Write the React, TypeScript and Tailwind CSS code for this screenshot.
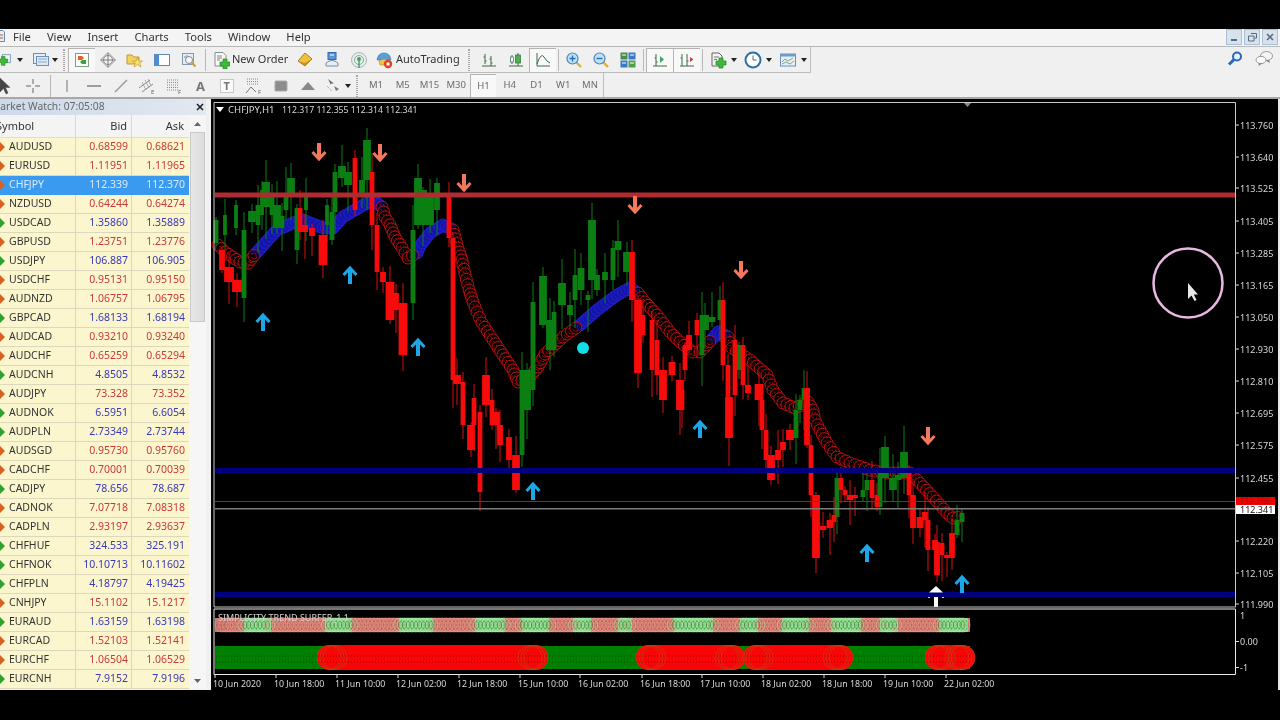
import React from "react";

type Row = [string, string, string, "r" | "b" | "s"];
const rows: Row[] = [
  ["AUDUSD", "0.68599", "0.68621", "r"],
  ["EURUSD", "1.11951", "1.11965", "r"],
  ["CHFJPY", "112.339", "112.370", "s"],
  ["NZDUSD", "0.64244", "0.64274", "r"],
  ["USDCAD", "1.35860", "1.35889", "b"],
  ["GBPUSD", "1.23751", "1.23776", "r"],
  ["USDJPY", "106.887", "106.905", "b"],
  ["USDCHF", "0.95131", "0.95150", "r"],
  ["AUDNZD", "1.06757", "1.06795", "r"],
  ["GBPCAD", "1.68133", "1.68194", "b"],
  ["AUDCAD", "0.93210", "0.93240", "r"],
  ["AUDCHF", "0.65259", "0.65294", "r"],
  ["AUDCNH", "4.8505", "4.8532", "b"],
  ["AUDJPY", "73.328", "73.352", "r"],
  ["AUDNOK", "6.5951", "6.6054", "b"],
  ["AUDPLN", "2.73349", "2.73744", "b"],
  ["AUDSGD", "0.95730", "0.95760", "r"],
  ["CADCHF", "0.70001", "0.70039", "r"],
  ["CADJPY", "78.656", "78.687", "b"],
  ["CADNOK", "7.07718", "7.08318", "r"],
  ["CADPLN", "2.93197", "2.93637", "r"],
  ["CHFHUF", "324.533", "325.191", "b"],
  ["CHFNOK", "10.10713", "10.11602", "b"],
  ["CHFPLN", "4.18797", "4.19425", "b"],
  ["CNHJPY", "15.1102", "15.1217", "r"],
  ["EURAUD", "1.63159", "1.63198", "b"],
  ["EURCAD", "1.52103", "1.52141", "r"],
  ["EURCHF", "1.06504", "1.06529", "r"],
  ["EURCNH", "7.9152", "7.9196", "b"],
];

/* x, bodyTop, bodyBottom, width */
const green: number[][] = [
  [216, 220, 243, 4], [225, 215, 235, 3], [236, 205, 228, 3], [244, 230, 298, 4], [252, 211, 222, 7], [258, 205, 225, 4], [262, 190, 215, 3],
  [266, 182, 207, 7], [272, 195, 215, 4],
  [277, 205, 228, 7], [282, 216, 228, 4], [286, 193, 210, 4], [291, 178, 193, 7], [297, 208, 250, 4], [306, 195, 210, 3], [327, 205, 225, 3],
  [332, 212, 240, 4], [335, 172, 212, 4], [342, 166, 178, 7], [348, 172, 185, 7], [362, 180, 195, 5], [367, 140, 180, 7],
  [413, 230, 303, 4], [418, 178, 225, 7], [423, 190, 225, 7], [430, 195, 225, 7], [437, 183, 210, 5],
  [522, 370, 455, 4], [527, 370, 410, 7], [533, 302, 390, 4], [543, 276, 325, 7], [550, 320, 350, 7], [554, 312, 350, 4],
  [562, 283, 305, 7], [570, 305, 315, 5], [575, 275, 300, 4], [581, 268, 290, 6], [588, 295, 300, 4], [592, 220, 280, 7],
  [597, 275, 290, 5], [605, 272, 280, 5], [613, 248, 280, 4], [618, 241, 250, 6], [627, 252, 272, 7],
  [702, 315, 355, 4], [705, 315, 330, 7], [712, 317, 322, 6], [720, 300, 320, 4], [739, 345, 370, 4],
  [796, 410, 438, 4], [800, 400, 410, 4], [804, 388, 400, 4],
  [837, 478, 517, 4], [863, 490, 497, 4], [867, 480, 490, 4], [880, 470, 507, 4], [885, 447, 478, 7], [893, 478, 490, 7],
  [898, 475, 480, 6], [904, 452, 478, 7], [957, 520, 535, 4], [962, 513, 522, 4],
];
const red: number[][] = [
  [222, 250, 270, 5], [229, 267, 282, 9], [237, 280, 292, 9], [300, 208, 232, 4], [305, 225, 232, 5], [312, 228, 236, 5],
  [323, 235, 265, 8], [355, 158, 210, 4], [372, 172, 225, 4], [377, 225, 272, 4], [383, 272, 282, 5], [390, 282, 320, 8],
  [396, 293, 310, 5], [403, 303, 355, 8],
  [449, 195, 238, 4], [453, 238, 380, 4], [457, 375, 384, 7], [463, 382, 425, 4], [471, 425, 450, 7], [474, 398, 425, 4],
  [480, 412, 492, 4], [486, 375, 405, 7], [492, 400, 425, 4], [496, 412, 425, 7], [500, 425, 445, 5], [509, 437, 460, 5],
  [516, 455, 490, 7],
  [632, 252, 300, 5], [638, 300, 373, 7], [643, 315, 335, 4], [652, 320, 370, 4], [657, 340, 375, 4], [663, 370, 400, 7],
  [672, 362, 375, 6], [680, 380, 410, 7], [682, 390, 410, 4], [685, 345, 370, 4], [689, 335, 350, 5], [697, 320, 335, 4],
  [723, 300, 365, 4], [728, 365, 397, 4], [729, 397, 438, 7], [735, 340, 395, 4], [743, 345, 385, 4], [748, 385, 393, 5],
  [759, 384, 400, 8], [762, 400, 430, 4], [766, 430, 460, 4], [771, 455, 480, 7], [778, 450, 460, 5], [783, 442, 450, 5],
  [790, 430, 440, 7], [807, 388, 445, 5], [811, 445, 495, 4], [816, 495, 558, 7], [823, 526, 530, 6], [830, 520, 528, 6],
  [834, 515, 522, 4], [841, 478, 490, 4], [845, 490, 495, 4], [850, 495, 500, 6], [855, 495, 498, 5], [872, 480, 498, 4],
  [877, 495, 507, 4], [909, 470, 495, 4], [913, 495, 528, 5], [920, 517, 528, 6], [925, 512, 520, 5], [928, 520, 550, 4],
  [935, 540, 550, 5], [937, 542, 575, 5], [942, 543, 555, 4], [947, 555, 558, 5], [952, 533, 558, 5],
];

const maPts: [number, number, number][] = [
  [218, 245, 0], [225, 252, 0], [240, 262, 0], [248, 263, 0], [257, 252, 1], [277, 230, 1], [293, 223, 1], [303, 220, 1],
  [323, 228, 1], [333, 228, 1], [343, 217, 1], [360, 207, 1], [373, 200, 1], [382, 207, 0], [385, 217, 0], [390, 225, 0],
  [395, 237, 0], [402, 248, 0], [408, 258, 0], [417, 253, 1], [420, 246, 1], [430, 233, 1], [443, 225, 1], [453, 230, 0],
  [458, 248, 0], [462, 260, 0], [465, 274, 0], [469, 290, 0], [473, 302, 0], [477, 312, 0], [482, 323, 0], [493, 340, 0],
  [503, 355, 0], [513, 370, 0], [518, 382, 0], [530, 377, 0], [538, 367, 0], [545, 354, 0], [563, 337, 0], [580, 325, 1],
  [597, 310, 1], [617, 295, 1], [630, 288, 1], [638, 293, 0], [645, 302, 0], [657, 315, 0], [670, 332, 0], [680, 342, 0],
  [693, 352, 0], [700, 352, 0], [713, 338, 1], [718, 332, 1], [728, 337, 0], [732, 348, 0], [750, 360, 0], [767, 375, 0],
  [773, 390, 0], [783, 403, 0], [795, 408, 0], [808, 402, 0], [813, 410, 0], [815, 420, 0], [820, 430, 0], [827, 443, 0],
  [837, 457, 0], [850, 463, 0], [870, 470, 0], [887, 473, 0], [910, 473, 0], [917, 480, 0], [933, 497, 0], [947, 513, 0],
  [953, 518, 0], [963, 517, 0],
];

function walk(step: number) {
  const out: { x: number; y: number; c: number }[] = [];
  for (let i = 0; i < maPts.length - 1; i++) {
    const [a, b, c] = maPts[i];
    const [d, e] = maPts[i + 1];
    const len = Math.hypot(d - a, e - b);
    const n = Math.max(1, Math.round(len / step));
    for (let k = 0; k < n; k++) out.push({ x: a + ((d - a) * k) / n, y: b + ((e - b) * k) / n, c });
  }
  return out;
}

const prices: [string, number][] = [
  ["113.760", 125], ["113.640", 157], ["113.525", 188], ["113.405", 221], ["113.285", 253], ["113.165", 285],
  ["113.050", 317], ["112.930", 349], ["112.810", 381], ["112.695", 413], ["112.575", 445], ["112.455", 478],
  ["112.220", 541], ["112.105", 573], ["111.990", 604],
];
const times: [string, number][] = [
  ["10 Jun 2020", 213], ["10 Jun 18:00", 274], ["11 Jun 10:00", 335], ["12 Jun 02:00", 396], ["12 Jun 18:00", 457],
  ["15 Jun 10:00", 518], ["16 Jun 02:00", 578], ["16 Jun 18:00", 640], ["17 Jun 10:00", 700], ["18 Jun 02:00", 761],
  ["18 Jun 18:00", 822], ["19 Jun 10:00", 883], ["22 Jun 02:00", 944],
];
const greenBands = [[244, 271], [325, 352], [399, 433], [475, 505], [522, 549], [573, 591], [618, 632], [674, 713], [740, 758], [782, 809], [831, 861], [880, 898], [939, 968]];
const redPills = [[317, 548], [636, 745], [743, 853], [925, 975]];

function Up({ x, y, c = "#1ea7e8" }: { x: number; y: number; c?: string }) {
  return (
    <g transform={`translate(${x} ${y})`} stroke={c} fill="none">
      <path d="M0 -7V9" strokeWidth="4" />
      <path d="M-6.5 0L0 -7L6.5 0" strokeWidth="3" />
    </g>
  );
}
function Down({ x, y }: { x: number; y: number }) {
  return (
    <g transform={`translate(${x} ${y})`} stroke="#f5785c" fill="none">
      <path d="M0 7V-9" strokeWidth="4" />
      <path d="M-6.5 0L0 7L6.5 0" strokeWidth="3" />
    </g>
  );
}

function Chart() {
  const ma = walk(5);
  const blue = walk(4).filter((p) => p.c);
  const ringsTop: { x: number; g: boolean }[] = [];
  for (let x = 222; x <= 964; x += 3.8) ringsTop.push({ x, g: greenBands.some(([a, b]) => x >= a && x <= b) });
  return (
    <svg width="1067" height="591" viewBox="211 99 1067 591" className="block shrink-0 bg-black">
      <g>
        {blue.map((p, i) => (
          <circle key={i} cx={p.x} cy={p.y} r="6" fill="#1414a8" stroke="#2222cc" strokeWidth="1" />
        ))}
        {ma.filter((p) => !p.c).map((p, i) => (
          <g key={i} fill="none" stroke="#cc1212">
            <circle cx={p.x} cy={p.y} r="6" fill="#000" fillOpacity=".55" strokeWidth=".9" />
            <path d={`M${p.x - 3} ${p.y + 1.5}Q${p.x} ${p.y + 5} ${p.x + 3} ${p.y + 1.5}`} strokeWidth=".7" />
            <path d={`M${p.x - 2} ${p.y - 2}h.9M${p.x + 1.2} ${p.y - 2}h.9`} strokeWidth=".9" />
          </g>
        ))}
      </g>
      {green.map(([x, t, b, w], i) => (
        <g key={i} fill="#0b7f12">
          <rect x={x - 0.5} y={t - ((i * 13) % 24) - 3} width="1" height={b - t + ((i * 13) % 24) + ((i * 17) % 30) + 6} />
          <rect x={x - (w + 0.8) / 2} y={t} width={w + 0.8} height={b - t} />
        </g>
      ))}
      {red.map(([x, t, b, w], i) => (
        <g key={i} fill="#f80b0b">
          <rect x={x - 0.5} y={t - ((i * 11) % 18) - 3} width="1" height={b - t + ((i * 11) % 18) + ((i * 19) % 26) + 6} fill="#d81010" />
          <rect x={x - (w + 0.8) / 2} y={t} width={w + 0.8} height={b - t} />
        </g>
      ))}
      <rect x="215" y="192.5" width="1020" height="5" fill="#b02c30" />
      <rect x="215" y="468" width="1020" height="5" fill="#00007f" />
      <rect x="215" y="592" width="1020" height="5" fill="#00007f" />
      <rect x="215" y="501" width="1020" height="1" fill="#a02020" />
      <rect x="215" y="508" width="1020" height="1.5" fill="#7c7c7c" />
      <circle cx="583" cy="348" r="6" fill="#12dde8" />
      {[[319, 152], [380, 153], [464, 183], [635, 205], [741, 270], [928, 436]].map(([x, y]) => (
        <Down key={x} x={x} y={y} />
      ))}
      {[[263, 322], [350, 275], [418, 347], [533, 491], [700, 429], [867, 553], [962, 584]].map(([x, y]) => (
        <Up key={x} x={x} y={y} />
      ))}
      <path d="M936 586L943 592.5H929Z" fill="#fff" />
      <rect x="934" y="597" width="4" height="10" fill="#fff" />
      <rect x="928" y="597" width="2" height="1" fill="#ddd" />
      <rect x="942" y="597" width="2" height="1" fill="#ddd" />

      {/* frames */}
      <path d="M214 102.5H1235.5V607H214Z" fill="none" stroke="#c8c8c8" strokeWidth="1" />
      <path d="M214 609H1235.5V674.5H214Z" fill="none" stroke="#e8e8e8" strokeWidth="1" />
      <path d="M964 103H971L967.5 107Z" fill="#888" />

      {/* header */}
      <path d="M216 107H224L220 112Z" fill="#fff" />
      <text x="228" y="112.5" fill="#d8d8d8" fontSize="9.6">CHFJPY,H1</text>
      <text x="282" y="112.5" fill="#d8d8d8" fontSize="8.7">112.317 112.355 112.314 112.341</text>

      {/* price axis */}
      {prices.map(([t, y]) => (
        <g key={t}>
          <rect x="1236" y={y - 0.5} width="3" height="1" fill="#ddd" />
          <text x="1240" y={y + 3.5} fill="#d8d8d8" fontSize="9">{t}</text>
        </g>
      ))}
      <rect x="1236" y="497" width="39" height="8" fill="#f00000" />
      <text x="1240" y="503.6" fill="#a01010" fontSize="8">112.368</text>
      <rect x="1236" y="505" width="39" height="9" fill="#fff" />
      <text x="1240" y="512.8" fill="#111" fontSize="9">112.341</text>

      {/* indicator strip 1 */}
      <rect x="215" y="618" width="755" height="14" fill="#cc7468" />
      {greenBands.map(([a, b]) => (
        <rect key={a} x={a} y="618" width={b - a} height="14" fill="#84d484" />
      ))}
      <g fill="none" stroke="#401818" strokeOpacity=".45" strokeDasharray="1 1.5" strokeWidth=".9">
        <path d="M216 621H968" />
        <path d="M216 625H968" />
        <path d="M216 629H968" />
      </g>
      <g fill="none" strokeWidth=".7">
        {ringsTop.map((r) => (
          <circle key={r.x} cx={r.x} cy="625" r="7" stroke={r.g ? "#b0f4b0" : "#f0a090"} strokeOpacity=".8" />
        ))}
        {ringsTop.filter((r) => r.g).map((r) => (
          <ellipse key={r.x} cx={r.x} cy="625" rx="2" ry="3.6" stroke="#2e6a2e" strokeWidth=".6" strokeOpacity=".6" />
        ))}
      </g>
      <text x="218" y="620.5" fill="#d0d0d0" fontSize="9">SIMPLICITY TREND SURFER_1 1</text>

      {/* indicator strip 2 */}
      <rect x="215" y="646" width="755" height="23" fill="#008000" />
      {redPills.map(([a, b]) => (
        <rect key={a} x={a} y="645" width={b - a} height="25" rx="12" fill="#f80606" />
      ))}
      <g fill="none" stroke="#300" strokeOpacity=".55" strokeWidth="1" strokeDasharray="1 2">
        <path d="M216 656H970" />
        <path d="M216 662H970" />
      </g>
      <g fill="none" stroke="#b84c18" strokeWidth=".7" strokeOpacity=".8">
        {redPills.flatMap(([a, b]) =>
          [0, 3, 6].flatMap((d) => [
            <circle key={`${a}-${d}`} cx={a + 12 + d} cy="657.5" r="12" />,
            <circle key={`${b}-${d}`} cx={b - 12 - d} cy="657.5" r="12" />,
          ]),
        )}
      </g>

      {/* sub axis */}
      <g fill="#d8d8d8" fontSize="9">
        <text x="1240" y="619">1</text>
        <text x="1240" y="645">0.00</text>
        <text x="1240" y="671">-1</text>
      </g>
      <rect x="1236" y="641" width="3" height="1" fill="#ddd" />
      <rect x="1236" y="667" width="3" height="1" fill="#ddd" />

      {/* time axis */}
      {times.map(([t, x]) => (
        <g key={t}>
          <rect x={x + 1.5} y="675" width="1" height="3" fill="#ddd" />
          <text x={x} y="686.5" fill="#d8d8d8" fontSize="8.8">{t}</text>
        </g>
      ))}

      {/* presenter's highlight */}
      <circle cx="1188" cy="283" r="34.5" fill="none" stroke="#eab8e4" strokeWidth="2.5" />
      <path d="M1188 283V299L1191.5 295.5L1194.5 301L1196.5 300L1193.8 294.5H1198Z" fill="#e8e8e8" />
    </svg>
  );
}

const I = ({ children }: { children: React.ReactNode }) => (
  <svg width="18" height="18" viewBox="0 0 18 18" className="block">{children}</svg>
);
const Plus = ({ x = 0, y = 0 }: { x?: number; y?: number }) => (
  <path transform={`translate(${x} ${y})`} d="M7 4H11V7H14V11H11V14H7V11H4V7H7Z" fill="#40b83a" stroke="#1e8a22" strokeWidth=".7" />
);
const Doc = () => <path d="M3 1.5H11L14 4.5V15H3Z" fill="#f8f8f8" stroke="#8a8a8a" />;
const Caret = () => (
  <svg width="6" height="4" viewBox="0 0 6 4" className="block"><path d="M0 0H6L3 4Z" fill="#222" /></svg>
);

const icons: Record<string, React.ReactNode> = {
  plus: (
    <>
      <rect x="6" y="3" width="9" height="9" fill="#eef4fa" stroke="#7a98b8" />
      <Plus x={-2} y={1} />
    </>
  ),
  profile: (
    <>
      <rect x="1.5" y="2.5" width="12" height="10" fill="#e4eef8" stroke="#6a90bc" />
      <rect x="4.5" y="5.5" width="12" height="9" fill="#dce8f4" stroke="#6a90bc" />
      <path d="M6 8H15M6 11H15" stroke="#8aa8c8" />
    </>
  ),
  mw: (
    <>
      <rect x="2.5" y="2.5" width="13" height="13" fill="#fff" stroke="#7fa27f" />
      <path d="M5 5H9L11 7L9 9H5Z" fill="#e06020" />
      <path d="M13 9H9L7 11L9 13H13Z" fill="#40a040" />
    </>
  ),
  cross: (
    <>
      <path d="M9 1.5L16.5 9L9 16.5L1.5 9Z" fill="none" stroke="#999" />
      <circle cx="9" cy="9" r="4.5" fill="#f5f5f5" stroke="#888" />
      <path d="M9 2V16M2 9H16" stroke="#777" />
    </>
  ),
  star: (
    <>
      <path d="M1 4H6L8 6H13V13H1Z" fill="#f4d060" stroke="#c09830" />
      <path d="M11.5 6.5L13 10H16.5L13.8 12.2L15 16L11.5 13.6L8 16L9.2 12.2L6.5 10H10Z" fill="#f6e070" stroke="#b89020" strokeWidth=".6" />
    </>
  ),
  navi: (
    <>
      <rect x="1.5" y="3.5" width="15" height="11" fill="#fdfdfd" stroke="#5a88b8" />
      <rect x="2" y="4" width="4" height="10" fill="#4a90d8" />
    </>
  ),
  tester: (
    <>
      <rect x="2.5" y="2.5" width="11" height="11" fill="#e8eef4" stroke="#8898a8" />
      <path d="M5 7V5M7 9V4M9 8V5" stroke="#6a8aa8" />
      <circle cx="9" cy="9" r="3.5" fill="#f4f8fc" stroke="#888" />
      <path d="M11.5 11.5L15.5 15.5" stroke="#c0a040" strokeWidth="2" />
    </>
  ),
  order: (
    <>
      <Doc />
      <path d="M5 5H10M5 7H10M5 9H8" stroke="#666" strokeWidth=".8" />
      <Plus x={4} y={4} />
    </>
  ),
  meta: (
    <>
      <path d="M9 2L16 8L9 15L2 10Z" fill="#f0c040" stroke="#a88020" />
      <path d="M2 10L9 15L16 8L9 12Z" fill="#c89020" />
    </>
  ),
  comm: (
    <>
      <rect x="5" y="1.5" width="8" height="7" fill="#5898d8" stroke="#3068a8" />
      <path d="M7 4H11" stroke="#fff" />
      <path d="M3 12Q9 7 15 12L15 15H3Z" fill="#e8eef4" stroke="#7090b0" />
    </>
  ),
  signal: (
    <>
      <circle cx="9" cy="9" r="7.5" fill="#e8eeec" stroke="#a8b8b0" />
      <circle cx="9" cy="9" r="4.5" fill="none" stroke="#90a8a0" />
      <circle cx="9" cy="8" r="2" fill="#40a060" />
      <path d="M9 9V17" stroke="#40a060" strokeWidth="1.4" />
    </>
  ),
  auto: (
    <>
      <path d="M2 9Q3 2 9 2Q15 2 16 9Z" fill="#58a0d8" stroke="#3870a8" strokeWidth=".6" />
      <path d="M4 10Q9 6 14 10L13 14H5Z" fill="#f0c050" stroke="#b08820" strokeWidth=".6" />
      <circle cx="13" cy="13" r="4.2" fill="#e04020" />
      <rect x="11.5" y="11.5" width="3" height="3" fill="#fff" />
    </>
  ),
  bars: (
    <path d="M2 15H16M5 3V13M3.5 6H5M5 10H6.5M11 5V15M9.5 8H11M11 12H12.5" stroke="#3c6a48" fill="none" />
  ),
  candles: (
    <>
      <path d="M2 15H16M5 4V13M11 2V15" stroke="#3c6a48" fill="none" />
      <rect x="3.5" y="6" width="3" height="5" fill="#fff" stroke="#3c6a48" strokeWidth=".7" />
      <rect x="8.5" y="4" width="5" height="8" fill="#50b050" stroke="#2c7038" strokeWidth=".7" />
    </>
  ),
  line: (
    <path d="M3 2V15H16M3 13Q7 1 10 6T16 12" stroke="#3c6a48" fill="none" />
  ),
  zin: (
    <>
      <path d="M11 11L16 16" stroke="#d8b040" strokeWidth="2.4" />
      <circle cx="7.5" cy="7.5" r="5.5" fill="#bfe0f4" stroke="#4a88b8" strokeWidth="1.2" />
      <path d="M4.5 7.5H10.5M7.5 4.5V10.5" stroke="#2a70b0" strokeWidth="1.4" />
    </>
  ),
  zout: (
    <>
      <path d="M11 11L16 16" stroke="#d8b040" strokeWidth="2.4" />
      <circle cx="7.5" cy="7.5" r="5.5" fill="#bfe0f4" stroke="#4a88b8" strokeWidth="1.2" />
      <path d="M4.5 7.5H10.5" stroke="#2a70b0" strokeWidth="1.4" />
    </>
  ),
  tile: (
    <>
      <rect x="1.5" y="1.5" width="7" height="7" fill="#4a8a50" />
      <rect x="9.5" y="1.5" width="7" height="7" fill="#3a78c8" />
      <rect x="1.5" y="9.5" width="7" height="7" fill="#3a78c8" />
      <rect x="9.5" y="9.5" width="7" height="7" fill="#50a050" />
      <path d="M3 4H7M11 4H15M3 12H7M11 12H15" stroke="#fff" />
    </>
  ),
  scroll: (
    <>
      <path d="M2 15H16M5 3V15M3.5 7H5M5 11H6.5" stroke="#3c6a48" fill="none" />
      <path d="M9 5L13 8.5L9 12Z" fill="#40a860" />
    </>
  ),
  shift: (
    <>
      <path d="M2 15H16M4 3V15M9 3V15M2.5 7H4M9 10H10.5" stroke="#3c6a48" fill="none" />
      <path d="M12 6L15.5 8.5L12 11Z" fill="#d04040" />
    </>
  ),
  ind: (
    <>
      <path d="M3 2H10L13 5V15H3Z" fill="#f2f2f2" stroke="#666" />
      <path d="M5 6H10M5 8.5H8" stroke="#555" strokeWidth=".8" />
      <Plus x={3} y={3} />
    </>
  ),
  clock: (
    <>
      <circle cx="9" cy="9" r="7.5" fill="#fff" stroke="#2a70a8" strokeWidth="2" />
      <path d="M9 4.5V9H12.5" stroke="#4a6a88" fill="none" />
    </>
  ),
  tmpl: (
    <>
      <rect x="1.5" y="3" width="15" height="12" fill="#e8f0f8" stroke="#6a90b8" />
      <rect x="1.5" y="3" width="15" height="2.5" fill="#6a9cd0" />
      <path d="M3 11L6 8L9 10L14 7M3 13L7 11L11 13L15 10" stroke="#6a9060" fill="none" strokeWidth=".8" />
    </>
  ),
  search: (
    <>
      <circle cx="11" cy="6.5" r="4" fill="#e8f2fa" stroke="#2a68c0" strokeWidth="2" />
      <path d="M8 9.5L3 14.5" stroke="#2a68c0" strokeWidth="3" />
    </>
  ),
  chat: (
    <>
      <ellipse cx="11.5" cy="6" rx="6" ry="4.5" fill="#f4f4f4" stroke="#999" />
      <path d="M14 10L15 13L11 10.5Z" fill="#777" />
      <ellipse cx="6" cy="10" rx="5" ry="3.6" fill="#fafafa" stroke="#999" />
      <path d="M4 13.5L3.5 16L7 13.5Z" fill="#777" />
    </>
  ),
  cursor: <path d="M4 1V15L7.5 11.5L10 17L12 16L9.5 10.5H14Z" fill="#444" stroke="#555" strokeWidth=".5" />,
  hair: <path d="M9 2V7M9 11V16M2 9H7M11 9H16" stroke="#666" fill="none" />,
  vl: <path d="M9 3V15" stroke="#999" strokeWidth="1.4" />,
  hl: <path d="M2 9H16" stroke="#777" strokeWidth="1.4" />,
  tl: <path d="M3 15L15 3" stroke="#999" strokeWidth="1.4" />,
  chan: (
    <>
      <path d="M1 11L12 3M4 15L15 7" stroke="#888" />
      <path d="M4 5L8 13M7 3L11 11M10 2L13 9" stroke="#999" strokeWidth=".8" />
      <text x="13" y="17" fontSize="6" fill="#666">E</text>
    </>
  ),
  fibo: (
    <>
      <path d="M2 3H13M2 5.5H13M2 8H13M2 10.5H13M2 13H13" stroke="#888" strokeDasharray="1 1" />
      <text x="13" y="17" fontSize="6" fill="#666">F</text>
    </>
  ),
  a: <text x="4" y="14" fontSize="13" fontWeight="700" fill="#777">A</text>,
  t: (
    <>
      <rect x="2.5" y="2.5" width="13" height="13" fill="#fbfbfb" stroke="#999" strokeDasharray="1 1" />
      <text x="5.5" y="13" fontSize="11" fontWeight="700" fill="#777">T</text>
    </>
  ),
  fibf: (
    <>
      <path d="M2 2H13M2 4.5H13M2 7H13" stroke="#888" strokeDasharray="1 1" />
      <path d="M1 16L6 10L11 15" stroke="#777" fill="none" />
      <text x="13" y="17" fontSize="6" fill="#666">F</text>
    </>
  ),
  rect: <rect x="3" y="4" width="12" height="10" rx="1" fill="#8c8c8c" stroke="#aaa" />,
  tri: <path d="M9 5L16 13H2Z" fill="#888" />,
  arrows: (
    <>
      <path d="M3 2L9 6.5L6 6.5L6 8Z" fill="#666" />
      <path d="M9 9L14 12L11 14Z" fill="#777" />
      <path d="M2 9L7 14" stroke="#999" strokeDasharray="1 1" />
    </>
  ),
};

const Cell = ({ n, cls = "w-[27px]", active }: { n: string; cls?: string; active?: boolean }) => (
  <div
    className={`${cls} h-[24px] flex items-center justify-center shrink-0 ${
      active ? "bg-[#f8f8f8] border-l border-t border-[#b4b4b4]" : ""
    }`}
  >
    <I>{icons[n]}</I>
  </div>
);
const Sep = ({ cls }: { cls: string }) => (
  <div className={`${cls} h-[22px] flex items-center justify-center shrink-0`}>
    <div className="w-px h-full bg-[#b8b8b8]" />
  </div>
);
const Grip = ({ cls }: { cls: string }) => (
  <div className={`${cls} h-[22px] flex items-center justify-center shrink-0`}>
    <div className="w-[2px] h-full border-x border-dotted border-[#a8a8a8]" />
  </div>
);
const CaretCell = ({ cls }: { cls: string }) => (
  <div className={`${cls} h-[24px] flex items-center justify-center shrink-0`}>
    <Caret />
  </div>
);
const Tf = ({ t, active }: { t: string; active?: boolean }) => (
  <div
    className={`w-[26.75px] h-[23px] flex items-center justify-center text-[9.5px] text-[#6c6c6c] shrink-0 ${
      active ? "bg-[#f8f8f8] border-l border-t border-[#b4b4b4]" : ""
    }`}
  >
    {t}
  </div>
);

function Arrowlet({ up }: { up: boolean }) {
  return (
    <svg width="5" height="10" viewBox="0 0 5 10" className="block shrink-0">
      <path d="M-3 3H0V0L5 5L0 10V7H-3Z" fill={up ? "#30a030" : "#d86020"} />
    </svg>
  );
}

function MarketWatch() {
  return (
    <div className="w-[211px] shrink-0 h-full bg-[#f0f0f0] overflow-hidden pr-[5px]">
      <div className="h-[16px] flex items-center bg-gradient-to-r from-[#cddaea] to-[#e2e8f0] relative overflow-hidden">
        <span className="text-[10.3px] text-[#666] -ml-[9px] -mt-[1px] whitespace-nowrap">Market Watch: 07:05:08</span>
        <span className="absolute right-[1px] top-[3px] w-[10px] h-[10px] flex items-center justify-center">
          <svg width="8" height="8" viewBox="0 0 8 8"><path d="M1 1L7 7M7 1L1 7" stroke="#222" strokeWidth="1.6" /></svg>
        </span>
      </div>
      <div className="flex">
        <div className="w-[189px] shrink-0">
          <div className="h-[23px] flex text-[11px] text-[#333] bg-[#f4f4f4] border-b border-[#dcdcdc]">
            <div className="w-[76px] flex items-center border-r border-[#d8d8d8] shrink-0 overflow-hidden">
              <span className="-ml-[4px]">Symbol</span>
            </div>
            <div className="w-[56px] pr-[4px] flex items-center justify-end border-r border-[#d8d8d8] shrink-0">Bid</div>
            <div className="w-[57px] pr-[5px] flex items-center justify-end shrink-0">Ask</div>
          </div>
          {rows.map(([s, b, a, k]) => {
            const cell = k === "s" ? "text-[#d8ecff]" : k === "r" ? "text-[#c83a38]" : "text-[#3838b8]";
            const bg = k === "s" ? "bg-[#3a9af0] border-[#3a9af0]" : "bg-[#fcf6cf] border-[#ddd8bc]";
            return (
              <div key={s} className={`h-[19px] flex items-center text-[10.5px] border-b ${bg}`}>
                <div className={`w-[76px] h-full flex items-center shrink-0 border-r ${k === "s" ? "border-[#3a9af0] text-[#d8ecff]" : "border-[#ddd8bc] text-[#333]"}`}>
                  <Arrowlet up={k === "b"} />
                  <span className="ml-[4px]">{s}</span>
                </div>
                <div className={`w-[56px] h-full flex items-center justify-end pr-[3px] shrink-0 border-r ${k === "s" ? "border-[#3a9af0]" : "border-[#ddd8bc]"} ${cell}`}>{b}</div>
                <div className={`w-[57px] h-full flex items-center justify-end pr-[4px] shrink-0 ${cell}`}>{a}</div>
              </div>
            );
          })}
        </div>
        <div className="w-[17px] shrink-0 flex flex-col items-center bg-[#f6f6f6]">
          <div className="h-[17px] flex items-center justify-center">
            <svg width="7" height="4" viewBox="0 0 7 4"><path d="M0 4H7L3.5 0Z" fill="#666" /></svg>
          </div>
          <div className="w-[15px] h-[190px] bg-gradient-to-r from-[#e8e8e8] to-[#dcdcdc] border border-[#c8c8c8]" />
          <div className="flex-1" />
          <div className="h-[16px] flex items-center justify-center">
            <svg width="7" height="4" viewBox="0 0 7 4"><path d="M0 0H7L3.5 4Z" fill="#666" /></svg>
          </div>
        </div>
      </div>
    </div>
  );
}

export default function App() {
  return (
    <div className="w-[1280px] h-[720px] bg-black overflow-hidden font-['Noto_Sans',sans-serif] blur-[0.35px]">
      <div className="h-[29px]" />
      {/* menu */}
      <div className="h-[18px] bg-[#f4f4f4] border-b border-[#b8b8b8] flex items-center relative">
        <svg width="5" height="12" viewBox="0 0 5 12" className="absolute left-0 top-[1px]">
          <path d="M-4 .5H3L4.5 2V11.5H-4Z" fill="#e8eef6" stroke="#6a8ab0" />
          <path d="M0 5H3M0 8H3" stroke="#c05030" />
        </svg>
        <div className="flex gap-[16px] pl-[13px] text-[11.2px] text-[#333]">
          {["File", "View", "Insert", "Charts", "Tools", "Window", "Help"].map((m) => (
            <span key={m}>{m}</span>
          ))}
        </div>
        <div className="ml-auto mr-[2px] flex gap-[2px] self-start">
          <div className="w-[16px] h-[16px] bg-[#d6e2ee] border border-[#a8c0d8] flex items-center justify-center">
            <div className="w-[6px] h-[2px] bg-[#5a6a7a] mt-[5px]" />
          </div>
          <div className="w-[16px] h-[16px] bg-[#d6e2ee] border border-[#a8c0d8] flex items-center justify-center">
            <svg width="9" height="9" viewBox="0 0 9 9"><path d="M3 .5H8.5V5H6.5M.5 3H6V8H.5Z" fill="none" stroke="#5a6a7a" /></svg>
          </div>
          <div className="w-[16px] h-[16px] bg-[#d6e2ee] border border-[#a8c0d8] flex items-center justify-center">
            <svg width="8" height="8" viewBox="0 0 8 8"><path d="M1 1L7 7M7 1L1 7" stroke="#5a6a7a" strokeWidth="1.6" /></svg>
          </div>
        </div>
      </div>
      {/* toolbar 1 */}
      <div className="h-[26px] bg-[#f0f0f0] flex">
        <div className="w-[811px] h-full flex items-center border-b border-r border-[#bcbcbc] shrink-0 overflow-hidden">
          <Cell n="plus" cls="w-[16px] -ml-[3px]" />
          <CaretCell cls="w-[14px]" />
          <Cell n="profile" cls="w-[18px] ml-[5px]" />
          <CaretCell cls="w-[10px]" />
          <Grip cls="w-[7.5px]" />
          <Cell n="mw" active />
          <Cell n="cross" />
          <Cell n="star" />
          <Cell n="navi" />
          <Cell n="tester" />
          <Sep cls="w-[5.5px]" />
          <div className="w-[83.5px] h-[24px] pl-[4px] flex items-center gap-[2px] shrink-0 text-[11px] text-[#333]">
            <I>{icons.order}</I>
            <span>New Order</span>
          </div>
          <Cell n="meta" />
          <Cell n="comm" />
          <Cell n="signal" />
          <div className="w-[90.5px] h-[24px] pl-[2.5px] flex items-center gap-[3px] shrink-0 text-[11px] text-[#333]">
            <I>{icons.auto}</I>
            <span>AutoTrading</span>
          </div>
          <Grip cls="w-[12px]" />
          <Cell n="bars" />
          <Cell n="candles" />
          <Cell n="line" active />
          <Sep cls="w-[4px]" />
          <Cell n="zin" />
          <Cell n="zout" />
          <Cell n="tile" />
          <Sep cls="w-[5px]" />
          <Cell n="scroll" active />
          <Cell n="shift" active />
          <Sep cls="w-[5px]" />
          <Cell n="ind" cls="w-[26px]" />
          <CaretCell cls="w-[6px]" />
          <Cell n="clock" cls="w-[26px] ml-[3px]" />
          <CaretCell cls="w-[6px]" />
          <Cell n="tmpl" cls="w-[26px] ml-[3px]" />
          <CaretCell cls="w-[6px]" />
        </div>
        <div className="ml-auto flex items-center h-[24px]">
          <Cell n="search" cls="w-[18px]" />
          <Cell n="chat" cls="w-[20px] ml-[10px] mr-[6px]" />
        </div>
      </div>
      {/* toolbar 2 */}
      <div className="h-[26px] bg-[#f0f0f0] border-b-2 border-[#a8a8a8] flex">
        <div className="w-[604px] h-full flex items-center border-r border-[#bcbcbc] shrink-0 overflow-hidden pt-[1px]">
          <Cell n="cursor" cls="w-[18px] -ml-[4px]" />
          <Cell n="hair" cls="w-[26px] ml-[6px]" />
          <Sep cls="w-[8px]" />
          <Cell n="vl" cls="w-[26.7px]" />
          <Cell n="hl" cls="w-[26.7px]" />
          <Cell n="tl" cls="w-[26.7px]" />
          <Cell n="chan" cls="w-[26.7px]" />
          <Cell n="fibo" cls="w-[26.7px]" />
          <Cell n="a" cls="w-[26.7px]" />
          <Cell n="t" cls="w-[26.7px]" />
          <Cell n="fibf" cls="w-[26.7px]" />
          <Cell n="rect" cls="w-[26.7px]" />
          <Cell n="tri" cls="w-[26.7px]" />
          <Cell n="arrows" cls="w-[26.7px]" />
          <CaretCell cls="w-[6px] -ml-[3px]" />
          <Grip cls="w-[12px]" />
          {["M1", "M5", "M15", "M30"].map((t) => <Tf key={t} t={t} />)}
          <Tf t="H1" active />
          {["H4", "D1", "W1", "MN"].map((t) => <Tf key={t} t={t} />)}
        </div>
      </div>
      {/* body */}
      <div className="h-[591px] flex">
        <MarketWatch />
        <Chart />
        <div className="w-[2px] bg-[#e8e8e8]" />
      </div>
    </div>
  );
}
